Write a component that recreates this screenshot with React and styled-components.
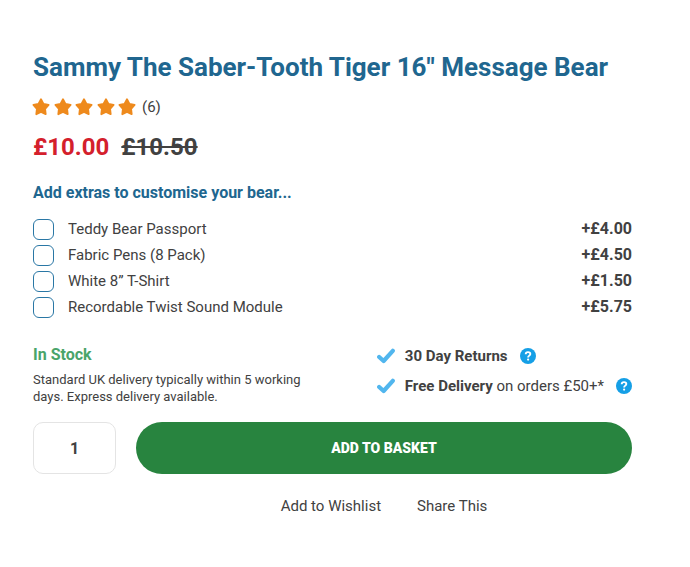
import React, { useState } from 'react';
import styled, { createGlobalStyle } from 'styled-components';

const GlobalStyle = createGlobalStyle`
  * {
    box-sizing: border-box;
  }

  body {
    margin: 0;
    background-color: #ffffff;
    color: #414141;
    font-family: Roboto, 'Liberation Sans', sans-serif;
    font-size: 15px;
  }

  button,
  input {
    font-family: inherit;
  }
`;

const StyledProduct = styled.main`
  padding: 51px 58px 51px 33px;
`;

const Title = styled.h1`
  margin: 0;
  color: #20668f;
  font-size: 26px;
  font-weight: 700;
  line-height: 32px;
`;

const Rating = styled.div`
  margin-top: 14px;
  display: flex;
  align-items: center;
  line-height: 20px;

  .stars {
    width: 104px;
    margin-left: -1px;
    margin-right: 6px;
    display: flex;
    justify-content: space-between;
  }
`;

const Price = styled.div`
  margin-top: 16px;
  display: flex;
  gap: 12px;
  font-size: 24px;
  font-weight: 700;
  line-height: 28px;

  ins {
    color: #d4202c;
    text-decoration: none;
  }
`;

const Extras = styled.fieldset`
  margin: 22px 0 0;
  padding: 0;
  min-width: 0;
  border: 0;

  legend {
    margin-bottom: 13px;
    padding: 0;
    color: #20668f;
    font-size: 16px;
    font-weight: 700;
    line-height: 20px;
  }
`;

const Extra = styled.label`
  display: flex;
  align-items: center;
  height: 26px;
  line-height: 20px;
  cursor: pointer;

  .name {
    flex: 1;
    margin-left: 14px;
  }

  .cost {
    font-size: 16px;
    font-weight: 700;
  }
`;

const Checkbox = styled.input`
  appearance: none;
  flex: none;
  width: 21px;
  height: 21px;
  margin: 0;
  border: 1px solid #2a77a5;
  border-radius: 6px;
  background-color: #ffffff;

  &:checked {
    background-color: #2a77a5;
    box-shadow: inset 0 0 0 4px #ffffff;
  }
`;

const Delivery = styled.div`
  margin-top: 21px;
  display: flex;
  justify-content: space-between;
`;

const Stock = styled.div`
  width: 280px;

  .status {
    color: #4aa46a;
    font-size: 16px;
    font-weight: 700;
    line-height: 28px;
  }

  p {
    margin: 2px 0 0;
    font-size: 13px;
    line-height: 17px;
  }
`;

const Benefits = styled.ul`
  margin: 0;
  padding: 0;
  list-style: none;
`;

const Benefit = styled.li`
  display: flex;
  align-items: center;
  height: 30px;
  white-space: nowrap;

  .text {
    margin: 0 12px 0 10px;
  }
`;

const HelpButton = styled.button`
  width: 16px;
  height: 16px;
  padding: 0;
  border: 0;
  background: none;
  cursor: pointer;

  svg {
    display: block;
  }
`;

const Purchase = styled.form`
  margin-top: 17px;
  display: flex;
  gap: 20px;
`;

const Quantity = styled.input`
  width: 83px;
  height: 52px;
  padding: 0;
  border: 1px solid #e4e4e4;
  border-radius: 10px;
  color: #414141;
  font-size: 16px;
  font-weight: 700;
  text-align: center;
`;

const BasketButton = styled.button`
  flex: 1;
  height: 52px;
  border: 0;
  border-radius: 26px;
  background-color: #28843f;
  color: #ffffff;
  font-size: 14px;
  font-weight: 900;
  text-transform: uppercase;
  cursor: pointer;
`;

const Links = styled.nav`
  margin-top: 22px;
  padding-left: 103px;
  display: flex;
  justify-content: center;
  gap: 36px;
  line-height: 20px;

  a {
    color: inherit;
    text-decoration: none;
  }
`;

const extras = [
  { id: 'passport', name: 'Teddy Bear Passport', cost: '+£4.00' },
  { id: 'pens', name: 'Fabric Pens (8 Pack)', cost: '+£4.50' },
  { id: 'shirt', name: 'White 8” T-Shirt', cost: '+£1.50' },
  { id: 'sound', name: 'Recordable Twist Sound Module', cost: '+£5.75' },
];

const Star = () => (
  <svg width="18" height="18" viewBox="0 0 18 18" aria-hidden="true">
    <path
      d="M9 1.3 11.5 5.9 16.6 6.9 13.1 10.8 13.7 16.2 9 14 4.3 16.2 4.9 10.8 1.4 6.9 6.5 5.9Z"
      fill="#ee8a1d"
      stroke="#ee8a1d"
      strokeWidth="1.8"
      strokeLinejoin="round"
    />
  </svg>
);

const Tick = () => (
  <svg width="18" height="16" viewBox="0 0 18 16" aria-hidden="true">
    <path
      d="M2.2 9 6.6 13 15.8 2.8"
      fill="none"
      stroke="#51b6ee"
      strokeWidth="4.2"
      strokeLinecap="round"
      strokeLinejoin="round"
    />
  </svg>
);

const Help = ({ label }) => (
  <HelpButton type="button" aria-label={label}>
    <svg width="16" height="16" viewBox="0 0 16 16" aria-hidden="true">
      <circle cx="8" cy="8" r="8" fill="#159fe6" />
      <path
        d="M5.7 6.2C5.7 4.8 6.7 4.1 8 4.1s2.3.7 2.3 1.9c0 1.6-2.2 1.7-2.2 3.5"
        fill="none"
        stroke="#ffffff"
        strokeWidth="1.9"
      />
      <circle cx="8.1" cy="11.6" r="1.1" fill="#ffffff" />
    </svg>
  </HelpButton>
);

const App = () => {
  const [quantity, setQuantity] = useState('1');

  return (
    <>
      <GlobalStyle />
      <StyledProduct>
        <Title>Sammy The Saber-Tooth Tiger 16" Message Bear</Title>
        <Rating>
          <div className="stars" role="img" aria-label="5 out of 5 stars">
            {[1, 2, 3, 4, 5].map(star => (
              <Star key={star} />
            ))}
          </div>
          <span>(6)</span>
        </Rating>
        <Price>
          <ins>£10.00</ins>
          <del>£10.50</del>
        </Price>
        <Extras>
          <legend>Add extras to customise your bear...</legend>
          {extras.map(extra => (
            <Extra key={extra.id}>
              <Checkbox type="checkbox" name={extra.id} />
              <span className="name">{extra.name}</span>
              <span className="cost">{extra.cost}</span>
            </Extra>
          ))}
        </Extras>
        <Delivery>
          <Stock>
            <div className="status">In Stock</div>
            <p>Standard UK delivery typically within 5 working days. Express delivery available.</p>
          </Stock>
          <Benefits>
            <Benefit>
              <Tick />
              <span className="text">
                <b>30 Day Returns</b>
              </span>
              <Help label="About returns" />
            </Benefit>
            <Benefit>
              <Tick />
              <span className="text">
                <b>Free Delivery</b> on orders £50+*
              </span>
              <Help label="About free delivery" />
            </Benefit>
          </Benefits>
        </Delivery>
        <Purchase onSubmit={event => event.preventDefault()}>
          <Quantity
            aria-label="Quantity"
            inputMode="numeric"
            value={quantity}
            onChange={event => setQuantity(event.target.value)}
          />
          <BasketButton type="submit">Add to basket</BasketButton>
        </Purchase>
        <Links>
          <a href="#wishlist">Add to Wishlist</a>
          <a href="#share">Share This</a>
        </Links>
      </StyledProduct>
    </>
  );
};

export default App;
